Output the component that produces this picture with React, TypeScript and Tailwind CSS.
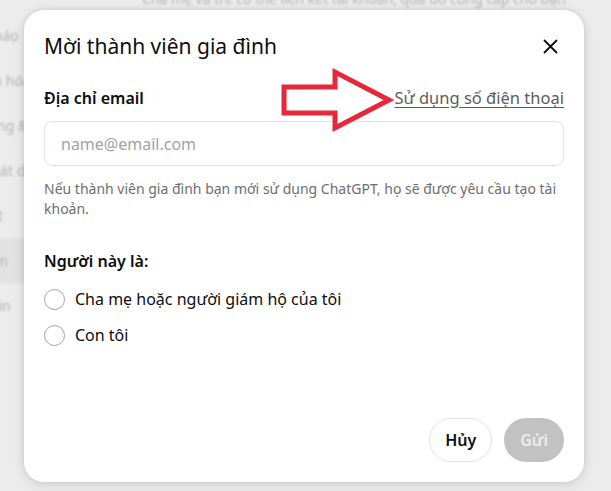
import React from "react";

const sideItems = [
  { label: "Thông báo", active: false },
  { label: "Cá nhân hóa", active: false },
  { label: "Ứng dụng & Trình kết nối", active: false },
  { label: "Kiểm soát dữ liệu", active: false },
  { label: "Bảo mật", active: false },
  { label: "Tìm kiếm", active: true },
  { label: "Tài khoản", active: false },
];

function CallOutArrow() {
  return (
    <svg
      className="absolute left-[277px] top-[66px]"
      width="118"
      height="68"
      viewBox="0 0 118 68"
      fill="none"
    >
      <polygon
        points="7,21 58,21 58,6 112,34 58,62 58,47 7,47"
        fill="#ffffff"
        stroke="#e8283a"
        strokeWidth="5"
        strokeLinejoin="miter"
      />
    </svg>
  );
}

function Radio({ label }: { label: string }) {
  return (
    <label className="flex h-[24px] items-center gap-[10px]">
      <span className="h-[21px] w-[21px] shrink-0 rounded-full border border-[#a3a3a3] bg-white" />
      <span className="text-[16px] text-[#0d0d0d]">{label}</span>
    </label>
  );
}

export default function App() {
  return (
    <div className="relative h-[491px] w-[611px] overflow-hidden bg-[#ececec] font-['Noto_Sans',sans-serif]">
      {/* settings page dimmed behind the dialog */}
      <div className="flex h-full text-[14px] text-[#b3b3b3] blur-[0.8px]">
        <aside className="-ml-[60px] flex w-[198px] shrink-0 flex-col pt-[13px]">
          {sideItems.map((it) => (
            <div
              key={it.label}
              className={
                "flex h-[45px] items-center whitespace-nowrap rounded-lg pl-[8px] " +
                (it.active ? "bg-[#e2e2e2]" : "")
              }
            >
              {it.label}
            </div>
          ))}
        </aside>
        <main className="-mt-[11px] flex flex-col gap-[2px] whitespace-nowrap pl-[4px] leading-[20px]">
          <p>Cha mẹ và trẻ có thể liên kết tài khoản, qua đó cũng cấp cho bạn</p>
          <p>một số chế độ kiểm soát để giúp bạn với trải nghiệm phù hợp</p>
        </main>
      </div>

      {/* invite dialog */}
      <div className="absolute left-[24px] top-[10px] flex h-[472px] w-[560px] flex-col rounded-[20px] bg-white px-[20px] pb-[20px] pt-[22px] shadow-[0_0_6px_rgba(0,0,0,0.12),0_4px_16px_rgba(0,0,0,0.08)]">
        <div className="flex h-[28px] items-center justify-between">
          <h2 className="text-[21px] font-normal leading-[28px] text-[#0d0d0d]">
            Mời thành viên gia đình
          </h2>
          <svg className="mr-[6px]" width="15" height="15" viewBox="0 0 15 15">
            <path
              d="M1.5 1.5 L13.5 13.5 M13.5 1.5 L1.5 13.5"
              stroke="#0d0d0d"
              strokeWidth="1.8"
              strokeLinecap="round"
            />
          </svg>
        </div>

        <div className="mt-[26px] flex h-[24px] items-center justify-between">
          <span className="text-[16px] font-semibold text-[#0d0d0d]">Địa chỉ email</span>
          <a className="text-[16.5px] text-[#5d5d5d] underline underline-offset-[3px]">
            Sử dụng số điện thoại
          </a>
        </div>

        <div className="mt-[11px] flex h-[45px] items-center rounded-[8px] border border-[#e3e3e3] px-[16px]">
          <span className="text-[16px] text-[#a2a2a2]">name@email.com</span>
        </div>

        <p className="mt-[13px] text-[14px] leading-[20px] text-[#6e6e6e]">
          Nếu thành viên gia đình bạn mới sử dụng ChatGPT, họ sẽ được yêu cầu tạo tài khoản.
        </p>

        <div className="mt-[30px] h-[24px] text-[16px] font-semibold leading-[24px] text-[#0d0d0d]">
          Người này là:
        </div>

        <div className="mt-[14px] flex flex-col gap-[12px]">
          <Radio label="Cha mẹ hoặc người giám hộ của tôi" />
          <Radio label="Con tôi" />
        </div>

        <div className="mt-auto flex justify-end gap-[12px]">
          <button className="h-[44px] rounded-full border border-[#e3e3e3] bg-white px-[15px] text-[16px] font-semibold text-[#0d0d0d]">
            Hủy
          </button>
          <button className="h-[44px] rounded-full bg-[#c2c2c2] px-[16px] text-[16px] font-semibold text-[#ececec]">
            Gửi
          </button>
        </div>
      </div>

      <CallOutArrow />
    </div>
  );
}
